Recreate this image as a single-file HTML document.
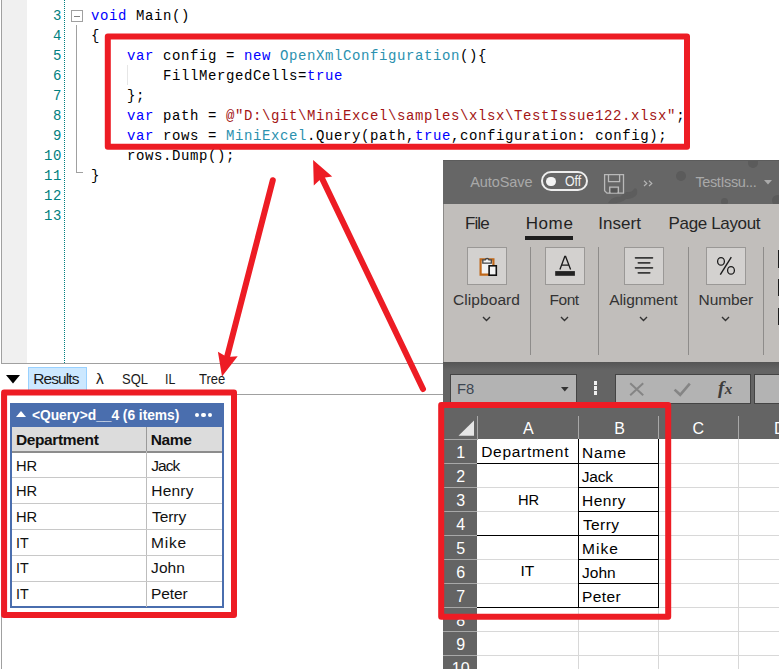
<!DOCTYPE html>
<html><head><meta charset="utf-8">
<style>
*{margin:0;padding:0;box-sizing:border-box}
html,body{width:779px;height:669px;overflow:hidden;background:#fff}
body{position:relative;font-family:'Liberation Sans',sans-serif}
.a{position:absolute}
.t{white-space:pre}
.mono{font-family:'Liberation Mono',monospace;font-size:14px;letter-spacing:0.6px;line-height:20px;white-space:pre;color:#000}
.ln{font-family:'Liberation Mono',monospace;font-size:14px;letter-spacing:0.6px;line-height:20px;color:#008080;text-align:right;width:40px}
.kw{color:#0000ff}.ty{color:#2b91af}.st{color:#a31515}
.btn{width:40px;height:38px;background:#d3d1cf;border:1px solid #9a9896}
.fbox{height:30px;background:#b3b3b3;border:1px solid #444}
</style></head><body>
<div class="a" style="left:1px;top:0px;width:1px;height:364px;background:#a0a0a0;"></div>
<div class="a" style="left:2px;top:0px;width:25px;height:363px;background:#f0f0f0;"></div>
<div class="a" style="left:1px;top:363px;width:442px;height:1px;background:#a0a0a0;"></div>
<div class="a" style="left:1px;top:394px;width:442px;height:1px;background:#a0a0a0;"></div>
<div class="a" style="left:1px;top:395px;width:1px;height:274px;background:#a0a0a0;"></div>
<div class="a" style="left:64px;top:0;width:1px;height:363px;border-left:1px dotted #008080"></div>
<div class="a ln" style="left:22px;top:6px">3<br>4<br>5<br>6<br>7<br>8<br>9<br>10<br>11<br>12<br>13</div>
<div class="a" style="left:71px;top:10px;width:12px;height:12px;border:1px solid #a0a0a0"></div>
<div class="a" style="left:74px;top:16px;width:6px;height:1px;background:#808080;"></div>
<div class="a" style="left:76px;top:25px;width:1px;height:148px;background:#a0a0a0;"></div>
<div class="a" style="left:76px;top:172px;width:7px;height:1px;background:#a0a0a0;"></div>
<div class="a" style="left:127px;top:65px;width:1px;height:20px;background:#e6e6e6;"></div>
<div class="a mono" style="left:91px;top:6px"><span class="kw">void</span> Main()
{
    <span class="kw">var</span> config = <span class="kw">new</span> <span class="ty">OpenXmlConfiguration</span>(){
        FillMergedCells=<span class="kw">true</span>
    };
    <span class="kw">var</span> path = <span class="st">@"D:\git\MiniExcel\samples\xlsx\TestIssue122.xlsx"</span>;
    <span class="kw">var</span> rows = <span class="ty">MiniExcel</span>.Query(path,<span class="kw">true</span>,configuration: config);
    rows.Dump();
}</div>
<svg class="a" style="left:6px;top:375px" width="15" height="9"><polygon points="0,0 14,0 7,8.5" fill="#000"/></svg>
<div class="a" style="left:28px;top:367px;width:59px;height:28px;background:#cce8ff;border:1px solid #99d1ff"></div>
<div class="a t" style="font-size:15.5px;font-weight:400;line-height:15.5px;color:#1a1a1a;letter-spacing:-0.9px;left:33.20px;top:371.20px;">Results</div>
<div class="a t" style="font-size:15.5px;font-weight:400;line-height:15.5px;color:#1a1a1a;left:96.00px;top:371.20px;">λ</div>
<div class="a t" style="font-size:15.5px;font-weight:400;line-height:15.5px;color:#1a1a1a;transform:scaleX(0.8367);transform-origin:0 0;left:121.66px;top:371.20px;">SQL</div>
<div class="a t" style="font-size:15.5px;font-weight:400;line-height:15.5px;color:#1a1a1a;transform:scaleX(0.8000);transform-origin:0 0;left:165.10px;top:371.20px;">IL</div>
<div class="a t" style="font-size:15.5px;font-weight:400;line-height:15.5px;color:#1a1a1a;transform:scaleX(0.8387);transform-origin:0 0;left:198.60px;top:371.20px;">Tree</div>
<div class="a" style="left:10px;top:403px;width:214px;height:24px;background:#4a6eae;"></div>
<svg class="a" style="left:16px;top:411px" width="11" height="7"><polygon points="0,6 10,6 5,0" fill="#fff"/></svg>
<div class="a t" style="font-size:13.8px;font-weight:700;line-height:13.8px;color:#ffffff;letter-spacing:-0.035px;left:32.00px;top:408.90px;">&lt;Query&gt;d__4 (6 items)</div>
<div class="a" style="left:194.75px;top:412.75px;width:4.5px;height:4.5px;border-radius:50%;background:#fff"></div>
<div class="a" style="left:201.25px;top:412.75px;width:4.5px;height:4.5px;border-radius:50%;background:#fff"></div>
<div class="a" style="left:207.75px;top:412.75px;width:4.5px;height:4.5px;border-radius:50%;background:#fff"></div>
<div class="a" style="left:10px;top:427px;width:214px;height:181px;border:2px solid #4a6eae;border-top:0"></div>
<div class="a" style="left:12px;top:427px;width:210px;height:24px;background:#dcdcdc;"></div>
<div class="a" style="left:12px;top:451px;width:210px;height:1.5px;background:#8c8c8c;"></div>
<div class="a" style="left:146px;top:427px;width:1px;height:180px;background:#bdbdbd;"></div>
<div class="a" style="left:146px;top:427px;width:1px;height:24px;background:#9a9a9a;"></div>
<div class="a" style="left:12px;top:477px;width:210px;height:1px;background:#c8c8c8;"></div>
<div class="a" style="left:12px;top:503px;width:210px;height:1px;background:#c8c8c8;"></div>
<div class="a" style="left:12px;top:529px;width:210px;height:1px;background:#c8c8c8;"></div>
<div class="a" style="left:12px;top:555px;width:210px;height:1px;background:#c8c8c8;"></div>
<div class="a" style="left:12px;top:581px;width:210px;height:1px;background:#c8c8c8;"></div>
<div class="a t" style="font-size:15.5px;font-weight:700;line-height:15.5px;color:#111111;letter-spacing:-0.356px;left:15.90px;top:431.70px;">Department</div>
<div class="a t" style="font-size:15.5px;font-weight:700;line-height:15.5px;color:#111111;letter-spacing:-0.367px;left:150.70px;top:431.70px;">Name</div>
<div class="a t" style="font-size:15.5px;font-weight:400;line-height:15.5px;color:#111111;transform:scaleX(0.9476);transform-origin:0 0;left:16.45px;top:457.55px;">HR</div>
<div class="a t" style="font-size:15.5px;font-weight:400;line-height:15.5px;color:#111111;letter-spacing:-0.933px;left:151.20px;top:457.55px;">Jack</div>
<div class="a t" style="font-size:15.5px;font-weight:400;line-height:15.5px;color:#111111;transform:scaleX(0.9476);transform-origin:0 0;left:16.45px;top:483.27px;">HR</div>
<div class="a t" style="font-size:15.5px;font-weight:400;line-height:15.5px;color:#111111;letter-spacing:0.2px;left:151.30px;top:483.27px;">Henry</div>
<div class="a t" style="font-size:15.5px;font-weight:400;line-height:15.5px;color:#111111;transform:scaleX(0.9476);transform-origin:0 0;left:16.45px;top:508.99px;">HR</div>
<div class="a t" style="font-size:15.5px;font-weight:400;line-height:15.5px;color:#111111;letter-spacing:-0.075px;left:152.00px;top:508.99px;">Terry</div>
<div class="a t" style="font-size:15.5px;font-weight:400;line-height:15.5px;color:#111111;transform:scaleX(0.9231);transform-origin:0 0;left:16.48px;top:534.71px;">IT</div>
<div class="a t" style="font-size:15.5px;font-weight:400;line-height:15.5px;color:#111111;letter-spacing:0.767px;left:151.10px;top:534.71px;">Mike</div>
<div class="a t" style="font-size:15.5px;font-weight:400;line-height:15.5px;color:#111111;transform:scaleX(0.9231);transform-origin:0 0;left:16.48px;top:560.43px;">IT</div>
<div class="a t" style="font-size:15.5px;font-weight:400;line-height:15.5px;color:#111111;letter-spacing:0.033px;left:151.10px;top:560.43px;">John</div>
<div class="a t" style="font-size:15.5px;font-weight:400;line-height:15.5px;color:#111111;transform:scaleX(0.9231);transform-origin:0 0;left:16.48px;top:586.15px;">IT</div>
<div class="a t" style="font-size:15.5px;font-weight:400;line-height:15.5px;color:#111111;letter-spacing:-0.125px;left:151.10px;top:586.15px;">Peter</div>
<div class="a" style="left:443px;top:160px;width:336px;height:44px;background:#666666;"></div>
<div class="a" style="left:443px;top:160px;width:336px;height:44px;overflow:hidden">
<div class="a" style="left:304.7px;top:-2.6px;width:10.4px;height:10.4px;border-radius:50%;background:#5b5b5b"></div>
<div class="a" style="left:233.0px;top:10.6px;width:10px;height:10px;border-radius:50%;background:#5b5b5b"></div>
<div class="a" style="left:278.0px;top:38.0px;width:7.2px;height:7.2px;border-radius:50%;background:#5b5b5b"></div>
<div class="a" style="left:329.0px;top:34.5px;width:11.0px;height:11.0px;border-radius:50%;background:#5b5b5b"></div>
</div>
<div class="a t" style="font-size:14.5px;font-weight:400;line-height:14.5px;color:#a9a9a9;letter-spacing:-0.1px;left:470.30px;top:174.80px;">AutoSave</div>
<div class="a" style="left:541px;top:171px;width:47px;height:20px;border:2px solid #eeeeee;border-radius:10px"></div>
<div class="a" style="left:546.3px;top:176.6px;width:9.4px;height:9.4px;border-radius:50%;background:#f4f4f4"></div>
<div class="a t" style="font-size:14.5px;font-weight:400;line-height:14.5px;color:#f2f2f2;transform:scaleX(0.8526);transform-origin:0 0;left:564.80px;top:174.45px;">Off</div>
<svg class="a" style="left:0;top:0" width="779" height="669"><g fill="#5d5d5d"><path d="M608,203 C611,198 616,196 620,197 L624,193 C628,191 631,193 633,190 C636,186 638,190 637,194 C635,198 630,199 626,199 C622,203 615,204 608,203 Z"/><circle cx="628.5" cy="194" r="2"/></g><g fill="none" stroke="#b9b9b9" stroke-width="1.3"><path d="M604.6,174.6 H623.5 V193.2 H607 L604.6,190.8 Z"/><path d="M608.5,174.6 V181.6 H619.6 V174.6"/><path d="M609.7,193.2 V187.1 H618.4 V193.2"/></g><rect x="611" y="188.5" width="6" height="4" fill="#555"/></svg>
<svg class="a" style="left:643px;top:180px" width="11" height="7"><path d="M1,0.8 L3.8,3.4 L1,6 M6,0.8 L8.8,3.4 L6,6" fill="none" stroke="#b4b4b4" stroke-width="1.2"/></svg>
<div class="a t" style="font-size:14.5px;font-weight:400;line-height:14.5px;color:#a9a9a9;letter-spacing:-0.4px;left:695.50px;top:174.50px;">TestIssu...</div>
<svg class="a" style="left:764px;top:180px" width="9" height="5"><polygon points="0,0 8,0 4,4.5" fill="#aaaaaa"/></svg>
<div class="a" style="left:443px;top:204px;width:336px;height:158px;background:#c1bebb;"></div>
<div class="a t" style="font-size:17px;font-weight:400;line-height:17px;color:#262626;letter-spacing:-0.867px;left:464.90px;top:214.95px;">File</div>
<div class="a t" style="font-size:17px;font-weight:400;line-height:17px;color:#1f1f1f;letter-spacing:0.6px;left:525.70px;top:215.00px;">Home</div>
<div class="a t" style="font-size:17px;font-weight:400;line-height:17px;color:#262626;letter-spacing:0.04px;left:598.20px;top:215.10px;">Insert</div>
<div class="a t" style="font-size:17px;font-weight:400;line-height:17px;color:#262626;letter-spacing:-0.36px;left:668.60px;top:215.10px;">Page Layout</div>
<div class="a" style="left:525px;top:236px;width:48px;height:4px;background:#1e1e1e;"></div>
<div class="a btn" style="left:467px;top:247px"></div>
<div class="a btn" style="left:545px;top:247px"></div>
<div class="a btn" style="left:624px;top:247px"></div>
<div class="a btn" style="left:706px;top:247px"></div>
<div class="a" style="left:530px;top:247px;width:1px;height:108px;background:#8e8c8a;"></div>
<div class="a" style="left:598px;top:247px;width:1px;height:108px;background:#8e8c8a;"></div>
<div class="a" style="left:688px;top:247px;width:1px;height:108px;background:#8e8c8a;"></div>
<div class="a" style="left:763px;top:247px;width:1px;height:108px;background:#8e8c8a;"></div>
<div class="a" style="left:777.5px;top:250px;width:2px;height:18px;background:#1e1e1e;"></div>
<div class="a" style="left:777.5px;top:279px;width:2px;height:17px;background:#1e1e1e;"></div>
<div class="a" style="left:777.5px;top:308px;width:2px;height:17px;background:#1e1e1e;"></div>
<div class="a" style="left:443px;top:204px;width:1px;height:158px;background:#8c8a88;"></div>
<div class="a" style="left:443px;top:160px;width:336px;height:1px;background:#5c5c5c;"></div>
<svg class="a" style="left:0;top:0" width="779" height="669">
<path d="M480.6,259.3 H493.4 V274.6 H480.6 Z" fill="#f3f3f3" stroke="#c0681a" stroke-width="2.2"/>
<path d="M482.8,263.2 V259.8 H485.3 A1.9,1.9 0 0 1 488.9,259.8 H491.3 V263.2 Z" fill="#f4f4f4" stroke="#444" stroke-width="1.3"/>
<rect x="489.1" y="265.8" width="7.2" height="9.4" fill="#f3f3f3" stroke="#111" stroke-width="1.6"/>
<path d="M559.9,269.6 L564.8,256.4 H565.6 L570.6,269.6 M562.1,265.2 H568.5" fill="none" stroke="#1a1a1a" stroke-width="1.3"/>
<rect x="555.2" y="271.1" width="19.7" height="4.7" fill="#222"/>
<g stroke="#3a3a3a" stroke-width="1.8" stroke-linecap="round">
<path d="M635.6,257.8 H652.4 M638.4,262.8 H649.7 M635.6,267.8 H652.4 M638.4,272.8 H649.7"/>
</g>
<g fill="none" stroke="#1a1a1a" stroke-width="1.25">
<ellipse cx="721" cy="261.4" rx="3.4" ry="3.7"/>
<ellipse cx="731" cy="270.4" rx="3.4" ry="3.7"/>
<path d="M731.3,257.1 L720.3,274.6" stroke-width="1.4"/>
</g>
</svg>
<div class="a t" style="font-size:15.5px;font-weight:400;line-height:15.5px;color:#333333;letter-spacing:0.075px;left:453.00px;top:291.80px;">Clipboard</div>
<div class="a t" style="font-size:15.5px;font-weight:400;line-height:15.5px;color:#333333;letter-spacing:-0.5px;left:549.60px;top:291.80px;">Font</div>
<div class="a t" style="font-size:15.5px;font-weight:400;line-height:15.5px;color:#333333;letter-spacing:-0.075px;left:609.20px;top:291.60px;">Alignment</div>
<div class="a t" style="font-size:15.5px;font-weight:400;line-height:15.5px;color:#333333;letter-spacing:-0.12px;left:698.60px;top:291.60px;">Number</div>
<svg class="a" style="left:482px;top:316px" width="9" height="6"><path d="M1,1 L4.5,4.5 L8,1" fill="none" stroke="#333" stroke-width="1.4"/></svg>
<svg class="a" style="left:560px;top:316px" width="9" height="6"><path d="M1,1 L4.5,4.5 L8,1" fill="none" stroke="#333" stroke-width="1.4"/></svg>
<svg class="a" style="left:639px;top:316px" width="9" height="6"><path d="M1,1 L4.5,4.5 L8,1" fill="none" stroke="#333" stroke-width="1.4"/></svg>
<svg class="a" style="left:721px;top:316px" width="9" height="6"><path d="M1,1 L4.5,4.5 L8,1" fill="none" stroke="#333" stroke-width="1.4"/></svg>
<div class="a" style="left:443px;top:362px;width:336px;height:307px;background:#646464;"></div>
<div class="a" style="left:443px;top:362px;width:336px;height:8px;background:linear-gradient(#555,#646464);"></div>
<div class="a fbox" style="left:450px;top:374px;width:127px"></div>
<div class="a t" style="font-size:15.5px;font-weight:400;line-height:15.5px;color:#3c4652;transform:scaleX(0.9529);transform-origin:0 0;left:456.85px;top:381.45px;">F8</div>
<svg class="a" style="left:560.5px;top:386.8px" width="8" height="5"><polygon points="0,0 7.6,0 3.8,4.6" fill="#333"/></svg>
<div class="a" style="left:593.5px;top:381px;width:3.5px;height:3.5px;background:#f0f0f0;"></div>
<div class="a" style="left:593.5px;top:386px;width:3.5px;height:3.5px;background:#f0f0f0;"></div>
<div class="a" style="left:593.5px;top:391px;width:3.5px;height:3.5px;background:#f0f0f0;"></div>
<div class="a fbox" style="left:615px;top:374px;width:136px"></div>
<svg class="a" style="left:0;top:0" width="779" height="669"><path d="M630.2,383.2 L643.2,395.2 M643.2,383.2 L630.2,395.2" stroke="#858585" stroke-width="2"/><path d="M674.6,389.6 L680.2,394.8 L689.8,383.6" fill="none" stroke="#858585" stroke-width="2.6"/></svg>
<div class="a" style="left:718px;top:376px;font-family:'Liberation Serif',serif;font-style:italic;font-weight:bold;font-size:19px;line-height:24px;color:#3c3c3c">f<span style="font-size:15px;margin-left:0.5px">x</span></div>
<div class="a fbox" style="left:754px;top:374px;width:40px"></div>
<div class="a" style="left:477px;top:439px;width:302px;height:230px;background:#fff;"></div>
<div class="a" style="left:477px;top:416px;width:1px;height:23px;background:#a8a8a8;"></div>
<div class="a" style="left:578px;top:416px;width:1px;height:23px;background:#a8a8a8;"></div>
<div class="a" style="left:658px;top:416px;width:1px;height:23px;background:#a8a8a8;"></div>
<div class="a" style="left:738px;top:416px;width:1px;height:23px;background:#a8a8a8;"></div>
<div class="a" style="left:443px;top:439px;width:35px;height:1px;background:#a8a8a8;"></div>
<svg class="a" style="left:458px;top:420px" width="17" height="16"><polygon points="0.5,15.7 16,0.5 16,15.7" fill="#e6e6e6"/></svg>
<div class="a t" style="font-size:16px;font-weight:400;line-height:16px;color:#ffffff;left:523.10px;top:421.10px;">A</div>
<div class="a t" style="font-size:16px;font-weight:400;line-height:16px;color:#ffffff;left:614.20px;top:421.10px;">B</div>
<div class="a t" style="font-size:16px;font-weight:400;line-height:16px;color:#ffffff;left:692.50px;top:421.10px;">C</div>
<div class="a t" style="font-size:16px;font-weight:400;line-height:16px;color:#ffffff;left:774.00px;top:421.10px;">D</div>
<div class="a t" style="font-size:16px;font-weight:400;line-height:16px;color:#ffffff;left:440.70px;width:40px;text-align:center;top:445.10px;">1</div>
<div class="a" style="left:443px;top:463px;width:34px;height:1px;background:#a8a8a8;"></div>
<div class="a" style="left:477px;top:463px;width:302px;height:1px;background:#d8d8d8;"></div>
<div class="a t" style="font-size:16px;font-weight:400;line-height:16px;color:#ffffff;left:440.70px;width:40px;text-align:center;top:469.10px;">2</div>
<div class="a" style="left:443px;top:487px;width:34px;height:1px;background:#a8a8a8;"></div>
<div class="a" style="left:477px;top:487px;width:302px;height:1px;background:#d8d8d8;"></div>
<div class="a t" style="font-size:16px;font-weight:400;line-height:16px;color:#ffffff;left:440.70px;width:40px;text-align:center;top:493.10px;">3</div>
<div class="a" style="left:443px;top:511px;width:34px;height:1px;background:#a8a8a8;"></div>
<div class="a" style="left:477px;top:511px;width:302px;height:1px;background:#d8d8d8;"></div>
<div class="a t" style="font-size:16px;font-weight:400;line-height:16px;color:#ffffff;left:440.70px;width:40px;text-align:center;top:517.10px;">4</div>
<div class="a" style="left:443px;top:535px;width:34px;height:1px;background:#a8a8a8;"></div>
<div class="a" style="left:477px;top:535px;width:302px;height:1px;background:#d8d8d8;"></div>
<div class="a t" style="font-size:16px;font-weight:400;line-height:16px;color:#ffffff;left:440.70px;width:40px;text-align:center;top:541.10px;">5</div>
<div class="a" style="left:443px;top:559px;width:34px;height:1px;background:#a8a8a8;"></div>
<div class="a" style="left:477px;top:559px;width:302px;height:1px;background:#d8d8d8;"></div>
<div class="a t" style="font-size:16px;font-weight:400;line-height:16px;color:#ffffff;left:440.70px;width:40px;text-align:center;top:565.10px;">6</div>
<div class="a" style="left:443px;top:583px;width:34px;height:1px;background:#a8a8a8;"></div>
<div class="a" style="left:477px;top:583px;width:302px;height:1px;background:#d8d8d8;"></div>
<div class="a t" style="font-size:16px;font-weight:400;line-height:16px;color:#ffffff;left:440.70px;width:40px;text-align:center;top:589.10px;">7</div>
<div class="a" style="left:443px;top:607px;width:34px;height:1px;background:#a8a8a8;"></div>
<div class="a" style="left:477px;top:607px;width:302px;height:1px;background:#d8d8d8;"></div>
<div class="a t" style="font-size:16px;font-weight:400;line-height:16px;color:#ffffff;left:440.70px;width:40px;text-align:center;top:613.10px;">8</div>
<div class="a" style="left:443px;top:631px;width:34px;height:1px;background:#a8a8a8;"></div>
<div class="a" style="left:477px;top:631px;width:302px;height:1px;background:#d8d8d8;"></div>
<div class="a t" style="font-size:16px;font-weight:400;line-height:16px;color:#ffffff;left:440.70px;width:40px;text-align:center;top:637.10px;">9</div>
<div class="a" style="left:443px;top:655px;width:34px;height:1px;background:#a8a8a8;"></div>
<div class="a" style="left:477px;top:655px;width:302px;height:1px;background:#d8d8d8;"></div>
<div class="a t" style="font-size:16px;font-weight:400;line-height:16px;color:#ffffff;left:440.70px;width:40px;text-align:center;top:661.10px;">10</div>
<div class="a" style="left:443px;top:679px;width:34px;height:1px;background:#a8a8a8;"></div>
<div class="a" style="left:477px;top:679px;width:302px;height:1px;background:#d8d8d8;"></div>
<div class="a" style="left:578px;top:439px;width:1px;height:230px;background:#d8d8d8;"></div>
<div class="a" style="left:658px;top:439px;width:1px;height:230px;background:#d8d8d8;"></div>
<div class="a" style="left:738px;top:439px;width:1px;height:230px;background:#d8d8d8;"></div>
<div class="a" style="left:477px;top:462.8px;width:182px;height:1.4px;background:#000;"></div>
<div class="a" style="left:477px;top:534.8px;width:182px;height:1.4px;background:#000;"></div>
<div class="a" style="left:477px;top:606.8px;width:182px;height:1.4px;background:#000;"></div>
<div class="a" style="left:578px;top:486.8px;width:81px;height:1.4px;background:#000;"></div>
<div class="a" style="left:578px;top:510.8px;width:81px;height:1.4px;background:#000;"></div>
<div class="a" style="left:578px;top:558.8px;width:81px;height:1.4px;background:#000;"></div>
<div class="a" style="left:578px;top:582.8px;width:81px;height:1.4px;background:#000;"></div>
<div class="a" style="left:577.8px;top:439px;width:1.4px;height:169px;background:#000;"></div>
<div class="a" style="left:657.8px;top:439px;width:1.4px;height:169px;background:#000;"></div>
<div class="a t" style="font-size:15.5px;font-weight:400;line-height:15.5px;color:#000000;letter-spacing:0.7px;left:481.20px;top:444.40px;">Department</div>
<div class="a t" style="font-size:15.5px;font-weight:400;line-height:15.5px;color:#000000;letter-spacing:0.867px;left:581.90px;top:444.55px;">Name</div>
<div class="a t" style="font-size:15.5px;font-weight:400;line-height:15.5px;color:#000000;letter-spacing:-0.2px;left:581.70px;top:468.55px;">Jack</div>
<div class="a t" style="font-size:15.5px;font-weight:400;line-height:15.5px;color:#000000;letter-spacing:0.55px;left:581.90px;top:492.55px;">Henry</div>
<div class="a t" style="font-size:15.5px;font-weight:400;line-height:15.5px;color:#000000;letter-spacing:0.425px;left:582.90px;top:516.55px;">Terry</div>
<div class="a t" style="font-size:15.5px;font-weight:400;line-height:15.5px;color:#000000;letter-spacing:1.033px;left:582.10px;top:540.55px;">Mike</div>
<div class="a t" style="font-size:15.5px;font-weight:400;line-height:15.5px;color:#000000;letter-spacing:0.033px;left:582.00px;top:564.55px;">John</div>
<div class="a t" style="font-size:15.5px;font-weight:400;line-height:15.5px;color:#000000;letter-spacing:0.4px;left:582.10px;top:588.55px;">Peter</div>
<div class="a t" style="font-size:15.5px;font-weight:400;line-height:15.5px;color:#000000;transform:scaleX(0.9476);transform-origin:0 0;left:517.85px;top:491.85px;">HR</div>
<div class="a t" style="font-size:15.5px;font-weight:400;line-height:15.5px;color:#000000;letter-spacing:-0.1px;left:520.60px;top:563.40px;">IT</div>
<svg class="a" style="left:0;top:0" width="779" height="669">
<g fill="none" stroke="#ed1c24" stroke-width="6" stroke-linejoin="round">
<rect x="107.8" y="36.4" width="579.2" height="110.4"/>
<rect x="4.1" y="392.5" width="229.9" height="222.5"/>
<rect x="441.2" y="405" width="227" height="211.7"/>
</g>
<g stroke="#ed1c24" stroke-width="6" stroke-linecap="round" fill="#ed1c24">
<line x1="272.8" y1="180.2" x2="226" y2="361"/>
<line x1="423" y1="389" x2="320.1" y2="174.4"/>
</g>
<polygon points="222,376.5 217.9,351.8 227,357.1 237.7,356.3" fill="#ed1c24"/>
<polygon points="313.1,160 313.8,185.4 321.8,178 332.2,176.5" fill="#ed1c24"/>
</svg>
</body></html>
